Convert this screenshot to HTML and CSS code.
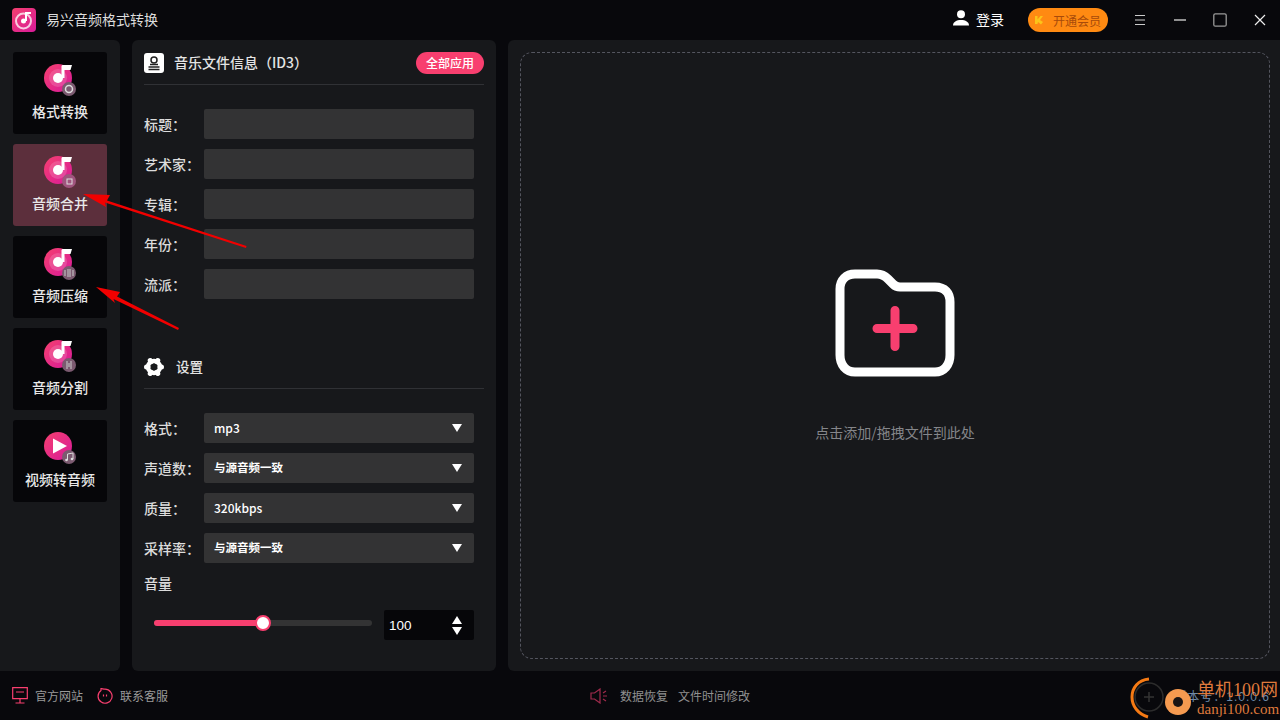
FILE: index.html
```html
<!DOCTYPE html>
<html lang="zh">
<head>
<meta charset="utf-8">
<title>易兴音频格式转换</title>
<link rel="stylesheet" href="styles.css">
</head>
<body>
<svg class="defs" width="0" height="0" aria-hidden="true">
  <defs>
    <linearGradient id="pk" x1="0" y1="0" x2="1" y2="1">
      <stop offset="0" stop-color="#f5406f"/><stop offset="1" stop-color="#d81a9a"/>
    </linearGradient>
    <symbol id="disc" viewBox="0 0 34 34">
      <circle cx="14" cy="16" r="14" fill="url(#pk)"/>
      <circle cx="14" cy="16" r="9" fill="#fff" fill-opacity=".16"/>
      <circle cx="14" cy="16" r="5" fill="#fff"/>
      <path d="M17.5 16V4.500c0-1 .6-1.500 1.500-1.500h9l-1.500 5h-6V16z" fill="#fff"/>
    </symbol>
    <symbol id="play" viewBox="0 0 34 34">
      <circle cx="14" cy="16" r="14" fill="url(#pk)"/>
      <path d="M9 8.500 23 16 9 23.500z" fill="#fff"/>
    </symbol>
  </defs>
</svg>
<div class="app">
  <header class="titlebar">
    <div class="brand">
      <svg class="logo" viewBox="0 0 24 24"><rect width="24" height="24" rx="4" fill="url(#pk)"/><circle cx="11.500" cy="13" r="7.500" fill="none" stroke="#fff" stroke-opacity=".75" stroke-width="2"/><circle cx="11.500" cy="13" r="2.500" fill="#fff"/><path d="M14 13V5h5" fill="none" stroke="#fff" stroke-width="2"/></svg>
      <span>易兴音频格式转换</span>
    </div>
    <div class="actions">
      <div class="login">
        <svg width="16" height="16" viewBox="0 0 16 16"><circle cx="8" cy="4.200" r="4" fill="#fff"/><path d="M0 15.500c0-3.600 3.500-5.500 8-5.500s8 1.900 8 5.500z" fill="#fff"/></svg>
        <span class="login-text">登录</span>
      </div>
      <div class="vip">
        <svg width="10" height="10" viewBox="0 0 10 10"><path d="M0 1h2.500v3.500L5.500 1H8L5 5l3 2-2 2.500-3-2.500-.5 2H0z" fill="#fcc419"/></svg>
        <span>开通会员</span>
      </div>
      <div class="winbtns">
        <span class="winbtn"><svg width="12" height="12" viewBox="0 0 12 12"><path d="M1 1.500h10M1 6h10M1 10.500h10" stroke="#ccc" stroke-width="1.200"/></svg></span>
        <span class="winbtn"><svg width="14" height="14" viewBox="0 0 14 14"><path d="M1 7h12" stroke="#ccc" stroke-width="1.400"/></svg></span>
        <span class="winbtn"><svg width="14" height="14" viewBox="0 0 14 14"><rect x=".8" y=".8" width="12.400" height="12.400" rx="1.500" fill="none" stroke="#999" stroke-width="1.300"/></svg></span>
        <span class="winbtn"><svg width="12" height="12" viewBox="0 0 12 12"><path d="M1 1l10 10M11 1 1 11" stroke="#eee" stroke-width="1.200"/></svg></span>
      </div>
    </div>
  </header>

  <main class="main">
    <nav class="sidebar">
      <div class="tool">
        <span class="tool-icon"><svg width="34" height="34"><use href="#disc"/></svg>
          <i class="badge"><svg width="10" height="10" viewBox="0 0 10 10"><circle cx="5" cy="5" r="3.500" fill="none" stroke="#ddd" stroke-width="1.500"/></svg></i></span>
        <span>格式转换</span>
      </div>
      <div class="tool active">
        <span class="tool-icon"><svg width="34" height="34"><use href="#disc"/></svg>
          <i class="badge"><svg width="10" height="10" viewBox="0 0 10 10"><rect x="3" y="3" width="5" height="5" fill="none" stroke="#ddd"/></svg></i></span>
        <span>音频合并</span>
      </div>
      <div class="tool">
        <span class="tool-icon"><svg width="34" height="34"><use href="#disc"/></svg>
          <i class="badge"><svg width="10" height="10" viewBox="0 0 10 10"><path d="M1 2v6M4 1v8M6 1v8M9 2v6" stroke="#ccc"/></svg></i></span>
        <span>音频压缩</span>
      </div>
      <div class="tool">
        <span class="tool-icon"><svg width="34" height="34"><use href="#disc"/></svg>
          <i class="badge"><svg width="10" height="10" viewBox="0 0 10 10"><path d="M3 1v8M7 1v8M5 3v4" stroke="#ccc"/></svg></i></span>
        <span>音频分割</span>
      </div>
      <div class="tool">
        <span class="tool-icon"><svg width="34" height="34"><use href="#play"/></svg>
          <i class="badge"><svg width="10" height="10" viewBox="0 0 10 10"><path d="M3.500 8V2L9 1v6" fill="none" stroke="#ddd"/><circle cx="2.500" cy="8" r="1.300" fill="#ddd"/><circle cx="8" cy="7" r="1.300" fill="#ddd"/></svg></i></span>
        <span>视频转音频</span>
      </div>
    </nav>

    <section class="panel">
      <div class="sec-head">
        <svg class="id-icon" width="20" height="20" viewBox="0 0 20 20"><rect width="20" height="20" rx="3" fill="#fff"/><circle cx="10" cy="7" r="3" fill="none" stroke="#222" stroke-width="1.500"/><path d="M6 11.500h8M4.500 14h11M4.500 16.500h11" stroke="#222" stroke-width="1.500"/></svg>
        <span class="sec-title">音乐文件信息（ID3）</span>
        <span class="apply">全部应用</span>
      </div>
      <div class="rows info-rows">
        <div class="row"><label>标题：</label><div class="field"></div></div>
        <div class="row"><label>艺术家：</label><div class="field"></div></div>
        <div class="row"><label>专辑：</label><div class="field"></div></div>
        <div class="row"><label>年份：</label><div class="field"></div></div>
        <div class="row"><label>流派：</label><div class="field"></div></div>
      </div>
      <div class="sec-head settings-head">
        <svg width="20" height="20" viewBox="0 0 20 20"><circle cx="10" cy="10" r="6" fill="none" stroke="#fff" stroke-width="4.400"/><path d="M16 10h1.500M13 15.200l.75 1.300M7 15.200l-.75 1.300M4 10H2.500M7 4.800l-.75-1.300M13 4.800l.75-1.300" stroke="#fff" stroke-width="5" stroke-linecap="round"/></svg>
        <span class="sec-title small">设置</span>
      </div>
      <div class="rows">
        <div class="row"><label>格式：</label><div class="field select"><span>mp3</span><i class="caret"></i></div></div>
        <div class="row"><label>声道数：</label><div class="field select"><span class="cn">与源音频一致</span><i class="caret"></i></div></div>
        <div class="row"><label>质量：</label><div class="field select"><span>320kbps</span><i class="caret"></i></div></div>
        <div class="row"><label>采样率：</label><div class="field select"><span class="cn">与源音频一致</span><i class="caret"></i></div></div>
      </div>
      <div class="vol-label">音量</div>
      <div class="vol">
        <div class="track"><div class="fill"></div><div class="thumb"></div></div>
        <div class="num"><span>100</span><span class="spin"><i class="up"></i><i class="down"></i></span></div>
      </div>
    </section>

    <section class="drop">
      <div class="dash">
        <svg width="120" height="108" viewBox="0 0 120 108">
          <path d="M20 5h22c5 0 8 2 11 5l5 5c2 2 4 3 7 3h35c10 0 15 6 15 15v53c0 10-6 17-15 17H20c-9 0-15-7-15-17V20C5 11 11 5 20 5z" fill="none" stroke="#fff" stroke-width="9"/>
          <path d="M60 41.500v36M42 59.500h36" fill="none" stroke="#f83f6f" stroke-width="9" stroke-linecap="round"/>
        </svg>
        <p>点击添加/拖拽文件到此处</p>
      </div>
    </section>
  </main>

  <footer class="footer">
    <div class="foot-left">
      <span class="foot-link"><svg width="16" height="17" viewBox="0 0 16 17"><path d="M.7.700h14.600v11H.7zM4 5h8M8 11.700v4M3.500 16h9" fill="none" stroke="#f83f6f" stroke-width="1.200"/></svg>官方网站</span>
      <span class="foot-link"><svg width="16" height="16" viewBox="0 0 16 16"><path d="M4 2.500A7 7 0 1 0 8 1.200C6.500 1.200 5 .500 4 .5z" fill="none" stroke="#f83f6f" stroke-width="1.200"/><path d="M6.500 6.500v2M9.500 6.500v2" stroke="#f83f6f" stroke-width="1.200"/></svg>联系客服</span>
    </div>
    <div class="foot-mid">
      <svg width="18" height="16" viewBox="0 0 18 16"><path d="M1 5h3.500L10 1v14L4.500 11H1zM13 5l3-2M13 8h4M13 11l3 2" fill="none" stroke="#a02a4c" stroke-width="1.200"/></svg>
      <span class="mid-first">数据恢复</span>
      <span>文件时间修改</span>
    </div>
    <div class="version">版本号：1.0.0.6</div>
  </footer>

  <svg class="arrows" width="1280" height="720" viewBox="0 0 1280 720">
    <path d="M83 194 110 195 107 200.500 246.500 246 246 248 105 202.500 106 207z" fill="#f20000"/>
    <path d="M96 287 120 292 117 296.500 179 328 178 330 113.500 299 115 303z" fill="#f20000"/>
  </svg>

  <div class="watermark">
    <svg width="66" height="44" viewBox="0 0 66 44">
      <path d="M19 3C8 4 2 12 2 21c0 9 6 17 16 20" fill="none" stroke="#f57a14" stroke-width="3"/>
      <circle cx="19" cy="21" r="14" fill="none" stroke="#2c2c2c" stroke-width="1.500"/>
      <path d="M14 21h10M19 16v10" stroke="#333" stroke-width="1.500"/>
      <circle cx="48" cy="26" r="13" fill="#f59a50"/>
      <circle cx="48" cy="26" r="5" fill="#1a1414"/>
    </svg>
    <div class="wm-text"><div>单机100网</div><div class="wm-url">danji100.com</div></div>
  </div>
</div>
</body>
</html>
```

FILE: styles.css
```css
* { box-sizing: border-box; }
html, body { margin: 0; height: 100%; }
body {
  background: #08080c;
  color: #e8e8e8;
  font-family: "Noto Sans CJK SC", "Liberation Sans", sans-serif;
  font-size: 14px;
  overflow: hidden;
}
.defs { position: absolute; }
.app { position: relative; width: 1280px; height: 720px; display: flex; flex-direction: column; }

.titlebar { height: 40px; flex: none; display: flex; align-items: center; justify-content: space-between; padding: 0 0 0 12px; }
.brand { display: flex; align-items: center; gap: 10px; font-size: 14px; color: #ddd; }
.brand span { padding-bottom: 2px; }
.logo { width: 24px; height: 24px; }
.actions { display: flex; align-items: center; }
.login { display: flex; align-items: center; gap: 7px; color: #fff; font-size: 14px; margin-right: 24px; }
.login svg { margin-top: -4px; }
.login-text { padding-bottom: 3px; }
.vip { width: 80px; height: 24px; border-radius: 12px; background: #ff8a12; display: flex; align-items: center; padding-left: 7px; gap: 8px; font-size: 12px; color: #a84a0a; margin-right: 12px; }
.winbtns { display: flex; align-items: center; }
.winbtn { width: 40px; display: flex; justify-content: center; }

.main { flex: none; height: 631px; display: flex; }
.sidebar { width: 120px; background: #17181b; border-radius: 0 6px 6px 0; padding: 12px 13px; display: flex; flex-direction: column; gap: 10px; }
.tool { height: 82px; background: #060609; border-radius: 3px; display: flex; flex-direction: column; align-items: center; padding-top: 10px; gap: 5px; font-size: 14px; font-weight: 500; line-height: 20px; color: #e8e8e8; }
.tool.active { background: #5c2f3c; }
.tool-icon { position: relative; display: block; width: 34px; height: 34px; margin-left: 2px; }
.tool-icon > svg { display: block; }
.badge { position: absolute; left: 18px; top: 20px; width: 14px; height: 14px; border-radius: 50%; background: #7b5a70; display: flex; align-items: center; justify-content: center; }
.badge svg { display: block; }
.tool.active .badge { background: #a0557e; }

.panel { width: 364px; margin-left: 12px; background: #17181b; border-radius: 6px; padding: 12px; display: flex; flex-direction: column; }
.sec-head { height: 33px; flex: none; display: flex; align-items: center; border-bottom: 1px solid #303135; padding-bottom: 11px; }
.sec-title { margin-left: 10px; padding-bottom: 2px; font-size: 14px; font-weight: 500; flex: 1; color: #e4e4e4; }
.sec-title.small { margin-left: 12px; font-size: 13.500px; }
.apply { width: 68px; height: 22px; border-radius: 11px; background: #f83f6f; color: #fff; font-size: 12px; font-weight: 500; line-height: 22px; text-align: center; }
.rows { display: flex; flex-direction: column; gap: 10px; padding-top: 24px; flex: none; }
.info-rows { height: 271px; }
.settings-head { padding-bottom: 10px; }
.row { display: flex; align-items: center; height: 30px; }
.row label { width: 60px; padding-bottom: 1px; font-size: 14px; font-weight: 500; color: #dcdcdc; }
.field { width: 270px; height: 30px; background: #333334; border-radius: 2px; }
.select { display: flex; align-items: center; justify-content: space-between; padding: 0 12px 0 10px; font-size: 12px; font-weight: 500; color: #fff; }
.select span { padding-bottom: 2px; }
.select .cn { font-size: 11.500px; font-weight: 700; }
.caret { width: 0; height: 0; border-left: 5.500px solid transparent; border-right: 5.500px solid transparent; border-top: 8px solid #fff; }
.vol-label { margin-top: 10px; line-height: 20px; font-weight: 500; color: #dcdcdc; }
.vol { display: flex; align-items: center; margin-top: 17px; }
.track { position: relative; width: 218px; height: 6px; margin: -5px 12px 0 10px; border-radius: 3px; background: #333334; }
.fill { width: 109px; height: 6px; border-radius: 3px; background: #f83f6f; }
.thumb { position: absolute; left: 101px; top: -5px; width: 16px; height: 16px; border-radius: 50%; background: #fff; border: 2.500px solid #f83f6f; }
.num { width: 90px; height: 30px; background: #060609; border-radius: 2px; display: flex; align-items: center; justify-content: space-between; padding: 0 12px 0 5px; font-family: "Liberation Sans", sans-serif; font-size: 13.500px; color: #fff; }
.spin { display: flex; flex-direction: column; gap: 3px; }
.spin i { display: block; width: 0; height: 0; border-left: 5px solid transparent; border-right: 5px solid transparent; }
.spin .up { border-bottom: 8px solid #fff; }
.spin .down { border-top: 8px solid #fff; }

.drop { flex: 1; margin-left: 12px; background: #17181b; border-radius: 6px 0 0 6px; padding: 12px 10px 12px 12px; }
.dash { height: 100%; border: 1px dashed #54555f; border-radius: 12px; display: flex; flex-direction: column; align-items: center; padding-top: 216px; }
.dash svg { display: block; margin-left: -1px; }
.dash p { margin: 45px 0 0; font-size: 14px; line-height: 20px; color: #85868a; }

.footer { height: 49px; flex: none; position: relative; display: flex; align-items: center; padding: 0 10px 0 12px; font-size: 12px; color: #9a9a9a; }
.foot-left { display: flex; gap: 14px; width: 578px; }
.foot-link { display: flex; align-items: center; gap: 7px; line-height: 17px; }
.foot-mid { display: flex; align-items: center; color: #909090; }
.foot-mid svg { margin-right: 12px; }
.mid-first { margin-right: 10px; }
.version { margin-left: auto; font-size: 12px; color: #6f8aa8; font-family: "Liberation Sans", "Noto Sans CJK SC", sans-serif; letter-spacing: 1px; }

.arrows { position: absolute; left: 0; top: 0; pointer-events: none; }
.watermark { position: absolute; left: 1130px; top: 676px; display: flex; align-items: flex-start; }
.wm-text { margin: 4px 0 0 1px; font-family: "Liberation Serif", "Noto Sans CJK SC", serif; font-size: 18px; line-height: 20px; color: #df7a3c; white-space: nowrap; }
.wm-url { font-size: 15px; line-height: 18px; }
```
